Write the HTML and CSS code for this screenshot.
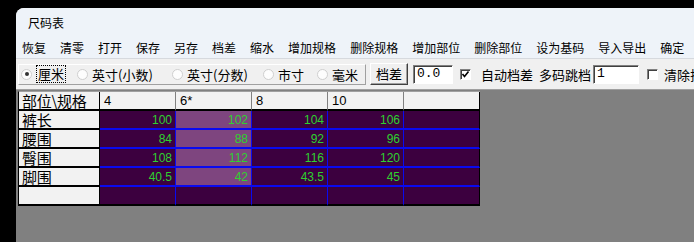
FILE: index.html
```html
<!DOCTYPE html>
<html lang="zh-CN">
<head>
    <meta charset="UTF-8">
    <meta name="viewport" content="width=device-width, initial-scale=1.0">
    <title>尺码表</title>
    <link rel="stylesheet" href="styles.css">
</head>
<body>
    <div class="window">
        <div class="titlebar">尺码表</div>

        <div class="menubar">
            <span class="menu-item">恢复</span>
            <span class="menu-item">清零</span>
            <span class="menu-item">打开</span>
            <span class="menu-item">保存</span>
            <span class="menu-item">另存</span>
            <span class="menu-item">档差</span>
            <span class="menu-item">缩水</span>
            <span class="menu-item">增加规格</span>
            <span class="menu-item">删除规格</span>
            <span class="menu-item">增加部位</span>
            <span class="menu-item">删除部位</span>
            <span class="menu-item">设为基码</span>
            <span class="menu-item">导入导出</span>
            <span class="menu-item">确定</span>
        </div>

        <div class="toolbar">
            <div class="unit-group">
                <label class="radio checked unit-cm"><span class="dot"></span><span class="focus">厘米</span></label>
                <label class="radio unit-inch"><span class="dot"></span>英寸(小数)</label>
                <label class="radio unit-frac"><span class="dot"></span>英寸(分数)</label>
                <label class="radio unit-cun"><span class="dot"></span>市寸</label>
                <label class="radio"><span class="dot"></span>毫米</label>
            </div>
            <span class="btn">档差</span>
            <span class="field field-diff">0.0</span>
            <label class="check checked">
                <span class="box">
                    <svg width="9" height="9" viewBox="0 0 9 9"><polyline points="1.5,4 3.5,6.5 7.5,1.5" fill="none" stroke="#000" stroke-width="1.6"/></svg>
                </span>自动档差
            </label>
            <span class="label">多码跳档</span>
            <span class="field field-jump">1</span>
            <label class="check clear"><span class="box"></span>清除排序</label>
        </div>

        <div class="client">
            <div class="grid">
                <div class="cell fixed">部位\规格</div>
                <div class="cell head">4</div>
                <div class="cell head">6*</div>
                <div class="cell head">8</div>
                <div class="cell head">10</div>
                <div class="cell head last-col"></div>

                <div class="cell fixed">裤长</div>
                <div class="cell data">100</div>
                <div class="cell data sel">102</div>
                <div class="cell data">104</div>
                <div class="cell data">106</div>
                <div class="cell data last-col"></div>

                <div class="cell fixed">腰围</div>
                <div class="cell data">84</div>
                <div class="cell data sel">88</div>
                <div class="cell data">92</div>
                <div class="cell data">96</div>
                <div class="cell data last-col"></div>

                <div class="cell fixed">臀围</div>
                <div class="cell data">108</div>
                <div class="cell data sel">112</div>
                <div class="cell data">116</div>
                <div class="cell data">120</div>
                <div class="cell data last-col"></div>

                <div class="cell fixed">脚围</div>
                <div class="cell data">40.5</div>
                <div class="cell data sel">42</div>
                <div class="cell data">43.5</div>
                <div class="cell data">45</div>
                <div class="cell data last-col"></div>

                <div class="cell fixed"></div>
                <div class="cell data last-row"></div>
                <div class="cell data last-row"></div>
                <div class="cell data last-row"></div>
                <div class="cell data last-row"></div>
                <div class="cell data last-row last-col"></div>
            </div>
        </div>
    </div>
</body>
</html>
```

FILE: styles.css
```css
body {
    margin: 0;
    height: 242px;
    overflow: hidden;
    background: #000;
    font-family: "Noto Sans CJK SC", "Liberation Sans", sans-serif;
    color: #000;
}
.window {
    margin: 8px 0 0 16px;
    height: 234px;
    display: flex;
    flex-direction: column;
    background: #f0f0f0;
    border-top-left-radius: 8px;
    overflow: hidden;
}
.titlebar {
    height: 29px;
    line-height: 29px;
    padding-left: 12px;
    font-size: 12px;
    background: #eef3f9;
}
.menubar {
    height: 21px;
    display: flex;
    align-items: center;
    font-size: 12px;
    background: #eef3f9;
    border-bottom: 1px solid #d6d9de;
    white-space: nowrap;
}
.menu-item {
    padding: 0 7px;
}
.menu-item:first-child {
    padding-left: 6px;
}

/* toolbar row */
.toolbar {
    height: 30px;
    display: flex;
    align-items: center;
    padding-left: 2px;
    font-size: 13px;
    white-space: nowrap;
    overflow: hidden;
}
.toolbar > * {
    flex-shrink: 0;
}
.unit-group {
    width: 344px;
    height: 19px;
    display: flex;
    align-items: center;
    padding-left: 2px;
    border: 1px solid;
    border-color: #fff #a0a0a0 #a0a0a0 #fff;
    box-sizing: content-box;
}
.radio {
    display: flex;
    align-items: center;
    width: 48px;
}
.unit-cm { width: 56px; }
.unit-inch { width: 95px; }
.unit-frac { width: 91px; }
.unit-cun { width: 54px; }
.radio .dot {
    width: 11px;
    height: 11px;
    border: 1px solid #cfcfcf;
    border-radius: 50%;
    background: #fdfdfd;
    margin-right: 4px;
    box-sizing: border-box;
    position: relative;
}
.radio.checked .dot::after {
    content: "";
    position: absolute;
    left: 2.5px;
    top: 2.5px;
    width: 4px;
    height: 4px;
    border-radius: 50%;
    background: #333;
}
.focus {
    border: 1px dotted #000;
    padding: 0 1px;
    line-height: 16px;
}
.btn {
    margin-left: 4px;
    width: 38px;
    height: 22px;
    line-height: 20px;
    text-align: center;
    box-sizing: border-box;
    border: 1px solid;
    border-color: #fff #404040 #404040 #fff;
    box-shadow: inset -1px -1px #a0a0a0;
}
.field {
    height: 19px;
    line-height: 16px;
    box-sizing: border-box;
    padding-left: 3px;
    background: #fff;
    border: 1px solid;
    border-color: #808080 #fff #fff #808080;
    box-shadow: inset 1px 1px #404040;
    font-family: "Liberation Mono", monospace;
    font-size: 13px;
}
.field-diff {
    margin-left: 5px;
    width: 40px;
}
.field-jump {
    margin-left: 2px;
    width: 46px;
}
.check {
    display: flex;
    align-items: center;
    margin-left: 7px;
}
.check.clear {
    margin-left: 8px;
}
.check .box {
    width: 11px;
    height: 11px;
    margin-right: 10px;
    box-sizing: border-box;
    background: #fff;
    border: 1px solid;
    border-color: #808080 #fff #fff #808080;
    box-shadow: inset 1px 1px #404040;
    display: flex;
    align-items: center;
    justify-content: center;
}
.check.clear .box {
    margin-right: 6px;
}
.check .box svg {
    display: block;
}
.label {
    margin-left: 6px;
}

/* size grid */
.client {
    flex: 1;
    background: #808080;
    border-top: 1px solid #a0a0a0;
    padding: 1px 0 0 2px;
}
.grid {
    display: grid;
    grid-template-columns: 81px repeat(5, 76px);
    grid-auto-rows: 19px;
    width: max-content;
    border-left: 1px solid #000;
    border-top: 1px solid #a0a0a0;
}
.cell {
    box-sizing: border-box;
    border-right: 1px solid #000;
    border-bottom: 2px solid #000;
    white-space: nowrap;
}
.fixed {
    background: #f2f2f2;
    font-size: 15px;
    line-height: 17px;
    padding-left: 3px;
    letter-spacing: -0.3px;
}
.head {
    background: #f2f2f2;
    border-right-color: #808080;
    font-family: "Liberation Sans", sans-serif;
    font-size: 13px;
    line-height: 17px;
    padding-left: 4px;
}
.data {
    background: #3c003f;
    border-right-color: #0a0af0;
    border-bottom-color: #0a0af0;
    color: #2fd12f;
    font-family: "Liberation Sans", sans-serif;
    font-size: 12px;
    line-height: 18px;
    text-align: right;
    padding-right: 3px;
}
.data.sel {
    background: #7e457f;
}
.last-row {
    border-bottom-color: #000;
}
.last-col {
    border-right-color: #000;
}
```
